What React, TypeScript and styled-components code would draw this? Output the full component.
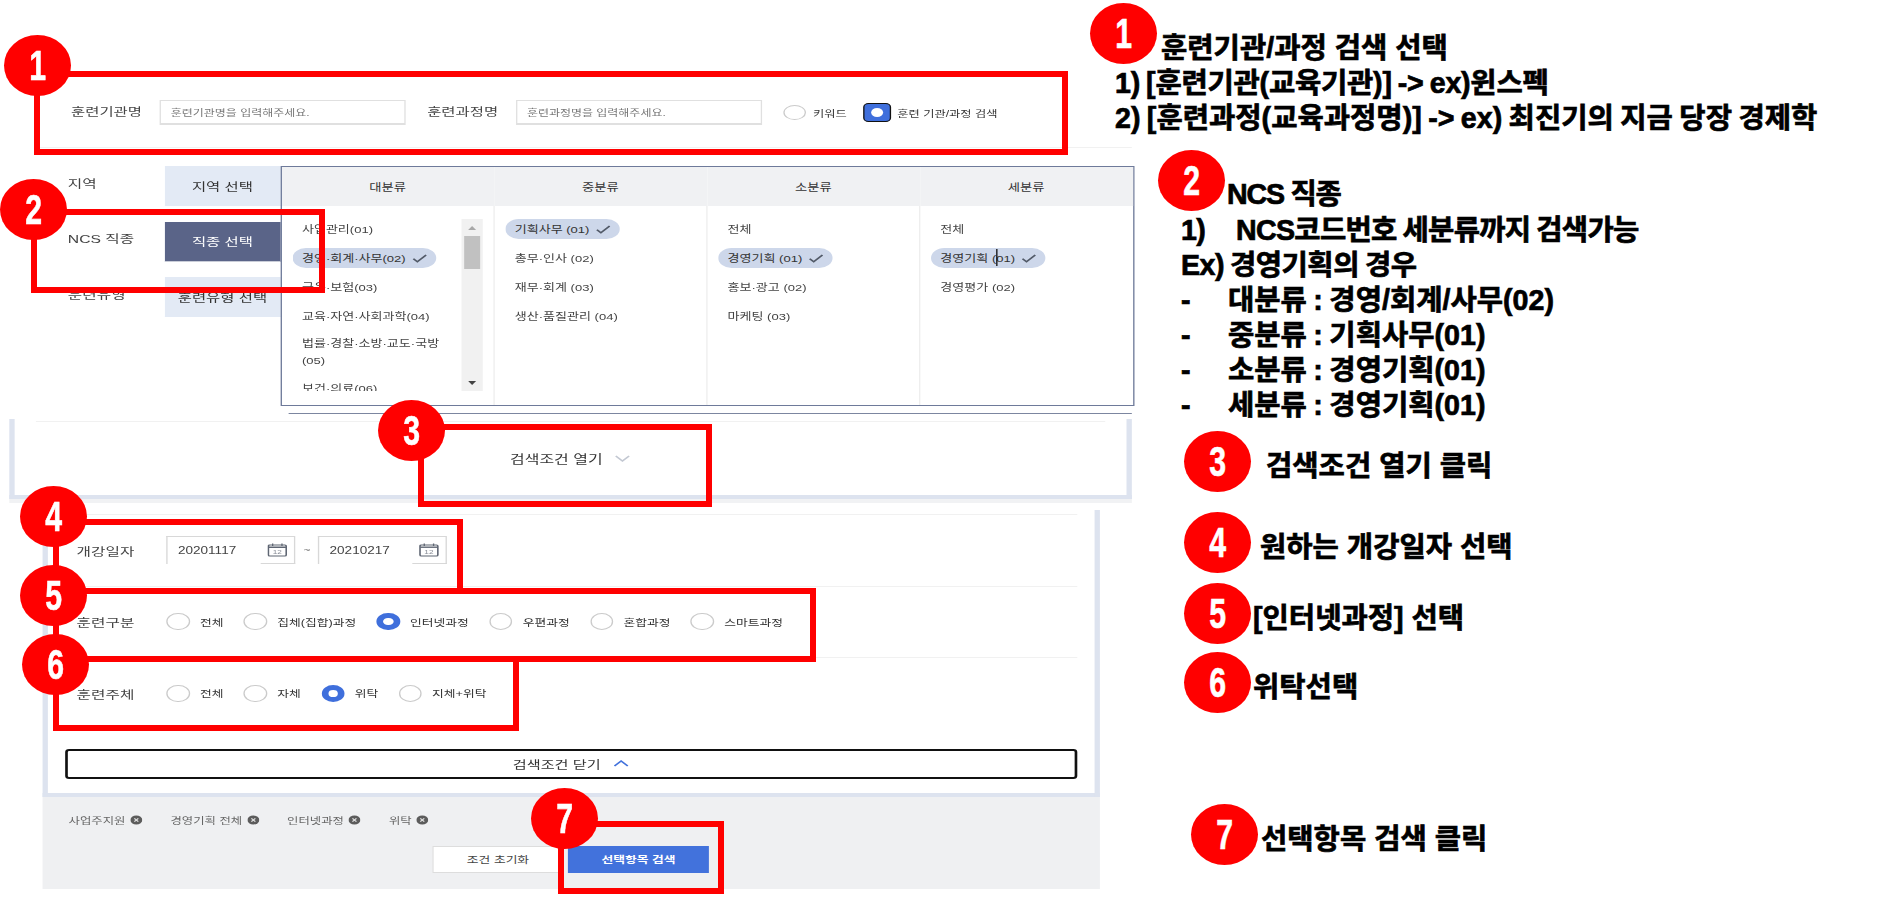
import React from "react";
import styled, { createGlobalStyle } from "styled-components";

const KR = `"Liberation Sans", "Noto Sans CJK KR", sans-serif`;

const GlobalStyle = createGlobalStyle`
  html, body { margin: 0; padding: 0; background: #fff; }
  * { box-sizing: border-box; }
`;

const Page = styled.div`
  position: relative;
  width: 1883px;
  height: 898px;
  display: flex;
  overflow: hidden;
  font-family: ${KR};
`;

/* the captured screen in the reference is stretched sideways, so lay it out narrow and widen it */
const ShotSlot = styled.div`
  flex: none;
  width: 1085px;
`;
const Shot = styled.div`
  width: 853.4px;
  transform: scaleX(1.33);
  transform-origin: left top;
  color: #444;
  filter: blur(0.3px);
`;

const SearchRow = styled.div`
  display: flex;
  align-items: center;
  height: 25px;
  margin-top: 100px;
  padding-left: 53.4px;
`;
const FieldLabel = styled.div`
  width: 67px;
  flex: none;
  font-size: 11.6px;
  margin-top: -3px;
  white-space: nowrap;
`;
const TextBox = styled.div`
  width: 185px;
  height: 25px;
  flex: none;
  display: flex;
  align-items: center;
  padding-left: 7px;
  margin-right: 15.8px;
  border: 1px solid #e0e0e0;
  border-bottom-width: 2px;
  font-size: 9px;
  color: #777;
  white-space: nowrap;
`;
const Radio = styled.span<{ $on?: boolean; $h?: number }>`
  display: block;
  flex: none;
  width: 17.3px;
  height: ${(p) => p.$h ?? 17}px;
  border-radius: 50%;
  background: #fff;
  border: ${(p) => (p.$on ? "5px solid #3f6fdc" : "1.7px solid #cbcbcb")};
`;
const FocusRing = styled.span`
  display: flex;
  flex: none;
  align-items: center;
  justify-content: center;
  width: 21px;
  height: 19px;
  border: 1.5px solid #111;
  border-radius: 4px;
  margin-left: 12px;
  background: #3f6fdc;
`;
const FocusDot = styled.span`
  display: block;
  width: 9px;
  height: 9px;
  border-radius: 50%;
  background: #fff;
`;
const SmallOption = styled.span`
  font-size: 9.2px;
  margin-left: 5px;
  white-space: nowrap;
  color: #333;
`;

const Divider = styled.div<{ $left: number; $w: number; $top: number; $color?: string }>`
  height: 1px;
  margin-left: ${(p) => p.$left}px;
  margin-top: ${(p) => p.$top}px;
  width: ${(p) => p.$w}px;
  background: ${(p) => p.$color ?? "#f1f1f1"};
`;

const SelectArea = styled.div`
  display: flex;
  margin-top: 18px;
  height: 240px;
`;
const FilterCol = styled.div`
  width: 210.5px;
  flex: none;
  padding-left: 51px;
  display: flex;
  flex-direction: column;
  gap: 15.5px;
`;
const FilterRow = styled.div`
  display: flex;
  align-items: center;
  height: 40px;
`;
const FilterLabel = styled.div`
  width: 73px;
  flex: none;
  font-size: 11.8px;
  margin-top: -8px;
  white-space: nowrap;
`;
const FilterButton = styled.div<{ $on?: boolean }>`
  width: 86.5px;
  height: 40px;
  flex: none;
  display: flex;
  align-items: center;
  justify-content: center;
  font-size: 11.6px;
  white-space: nowrap;
  background: ${(p) => (p.$on ? "#5a6488" : "#e3eaf5")};
  color: ${(p) => (p.$on ? "#fff" : "#333")};
  border-bottom: 1px solid ${(p) => (p.$on ? "#c9cdd8" : "#e3eaf5")};
`;

const CodeTable = styled.div`
  width: 642px;
  height: 240px;
  flex: none;
  border: 1px solid #6e7a9a;
  display: grid;
  grid-template-columns: repeat(4, 160px);
  grid-template-rows: 39px 1fr;
  overflow: hidden;
`;
const ColHead = styled.div`
  background: #f0f1f3;
  display: flex;
  align-items: center;
  justify-content: center;
  font-size: 10px;
  color: #333;
`;
const ColBody = styled.div<{ $last?: boolean }>`
  display: flex;
  border-right: ${(p) => (p.$last ? "none" : "1px solid #eee")};
  padding: 13px 0 0 8px;
  min-height: 0;
`;
const ItemList = styled.ul`
  list-style: none;
  margin: 0;
  padding: 0;
  flex: 1;
  height: 172px;
  overflow: hidden;
  display: flex;
  flex-direction: column;
  gap: 9px;
`;
const Item = styled.li`
  flex: none;
  min-height: 20px;
  display: flex;
  align-items: center;
  padding-left: 7.5px;
  padding-right: 3px;
  font-size: 9.8px;
  line-height: 17px;
  color: #444;
`;
const SelectedItem = styled.li`
  position: relative;
  flex: none;
  align-self: flex-start;
  height: 20px;
  display: flex;
  align-items: center;
  gap: 5px;
  padding: 0 7px 0 7.5px;
  border-radius: 10px;
  background: #cdd7ea;
  font-size: 9.8px;
  color: #333;
  white-space: nowrap;
`;
const Caret = styled.span`
  position: absolute;
  left: 49px;
  top: 1px;
  width: 1px;
  height: 17px;
  background: #111;
`;
const ScrollTrack = styled.div`
  width: 16px;
  height: 172px;
  flex: none;
  margin-right: 7.5px;
  background: #f1f1f1;
  display: flex;
  flex-direction: column;
  align-items: center;
`;
const ScrollArrow = styled.div<{ $down?: boolean }>`
  height: 17px;
  flex: none;
  display: flex;
  align-items: center;
  justify-content: center;
  &::before {
    content: "";
    border-left: 3.5px solid transparent;
    border-right: 3.5px solid transparent;
    border-bottom: ${(p) => (p.$down ? "none" : "4px solid #a8a8a8")};
    border-top: ${(p) => (p.$down ? "4px solid #444" : "none")};
  }
`;
const ScrollThumb = styled.div`
  width: 12.5px;
  height: 33px;
  background: #c1c1c1;
`;
const ScrollSpace = styled.div`
  flex: 1;
`;

const OpenPanel = styled.div`
  margin-top: 5px;
  margin-left: 6.8px;
  width: 844px;
  height: 80px;
  border: solid #dde3ef;
  border-width: 0 4.5px 4px;
  box-shadow: 0 4px 0 #f1f2f4;
  display: flex;
  flex-direction: column;
`;
const Toggle = styled.div`
  flex: 1;
  display: flex;
  align-items: center;
  justify-content: center;
  gap: 9px;
  font-size: 12px;
  color: #333;
`;
const OpenPanelLine = styled.div`
  height: 1px;
  margin: 2px 16px 0;
  background: #f1f1f1;
`;

const DetailPanel = styled.div`
  margin-top: 11px;
  margin-left: 31.6px;
  width: 795.5px;
  border: solid #dde3ef;
  border-width: 0 4px 4px;
  padding: 4px 13.5px 14px 13px;
`;
const DetailRow = styled.div`
  height: 71.5px;
  border-top: 1px solid #f1f1f1;
  display: flex;
  align-items: center;
  padding-left: 9px;
`;
const RowLabel = styled.div`
  width: 67.7px;
  flex: none;
  font-size: 11.8px;
  white-space: nowrap;
`;
const RadioGroup = styled.div`
  display: flex;
  align-items: center;
  gap: 15.4px;
`;
const RadioOption = styled.div`
  display: flex;
  align-items: center;
  gap: 7.8px;
  font-size: 9.6px;
  color: #333;
  white-space: nowrap;
`;
const DateField = styled.div`
  width: 97px;
  height: 28px;
  flex: none;
  display: flex;
  align-items: center;
  justify-content: space-between;
  padding-left: 7.5px;
  border-left: 1px solid #d8d8d8;
  border-top: 1px solid #d8d8d8;
  font-size: 10.2px;
  color: #444;
`;
const CalendarCell = styled.div`
  width: 26px;
  height: 27px;
  display: flex;
  align-items: center;
  justify-content: center;
  border-right: 1px solid #d8d8d8;
  border-bottom: 1px solid #d8d8d8;
`;
const Tilde = styled.div`
  width: 17px;
  flex: none;
  text-align: center;
  font-size: 9px;
  color: #777;
`;
const CloseButton = styled.div`
  margin-top: 20px;
  height: 30px;
  border: 2px solid #111;
  border-radius: 3px;
  background: #fff;
  display: flex;
  align-items: center;
  justify-content: center;
  gap: 9px;
  font-size: 11.4px;
  color: #333;
`;

const Footer = styled.div`
  margin-left: 31.6px;
  width: 795.5px;
  height: 92px;
  background: #eff0f2;
  padding: 15px 0 0 20px;
`;
const TagRow = styled.div`
  display: flex;
  align-items: center;
  gap: 21px;
  height: 16px;
`;
const Tag = styled.div`
  display: flex;
  align-items: center;
  gap: 3.8px;
  font-size: 9.3px;
  color: #666;
  white-space: nowrap;
`;
const ButtonRow = styled.div`
  display: flex;
  justify-content: center;
  gap: 3px;
  margin: 18px 0 0 -20px;
`;
const ResetButton = styled.div`
  width: 98.5px;
  height: 27px;
  background: #fff;
  border: 1px solid #ddd;
  display: flex;
  align-items: center;
  justify-content: center;
  font-size: 9.6px;
  color: #444;
`;
const SearchButton = styled.div`
  width: 106.8px;
  height: 27px;
  background: #4272dc;
  display: flex;
  align-items: center;
  justify-content: center;
  font-size: 9.6px;
  font-weight: 700;
  color: #fff;
`;

/* red notes drawn over the screen */
const Frame = styled.div<{ $x: number; $y: number; $w: number; $h: number }>`
  position: absolute;
  left: ${(p) => p.$x}px;
  top: ${(p) => p.$y}px;
  width: ${(p) => p.$w}px;
  height: ${(p) => p.$h}px;
  border: 6px solid #ff0000;
`;
const Dot = styled.div`
  width: 67px;
  height: 61px;
  flex: none;
  border-radius: 50%;
  background: #ff0000;
  display: flex;
  align-items: center;
  justify-content: center;
`;
const Digit = styled.span`
  display: block;
  color: #fff;
  font-family: "Liberation Sans", sans-serif;
  font-weight: 700;
  font-size: 42px;
  line-height: 1;
  transform: scaleX(0.72);
  -webkit-text-stroke: 0.6px #fff;
`;
const PinnedDot = styled(Dot)<{ $x: number; $y: number }>`
  position: absolute;
  left: ${(p) => p.$x}px;
  top: ${(p) => p.$y}px;
`;

const Notes = styled.div`
  flex: 1;
  min-width: 0;
  color: #000;
  font-weight: 700;
  font-size: 28.6px;
  -webkit-text-stroke: 0.7px #000;
  white-space: nowrap;
`;
const NoteHead = styled.div<{ $x: number; $top: number; $drop: number; $gap?: number }>`
  display: flex;
  align-items: center;
  gap: ${(p) => p.$gap ?? 4}px;
  margin-left: ${(p) => p.$x}px;
  margin-top: ${(p) => p.$top}px;
  height: 61px;
  line-height: 35px;
  & > span {
    padding-top: ${(p) => p.$drop}px;
  }
`;
const NoteTitleTight = styled.span`
  letter-spacing: -1.2px;
`;
const NoteLine = styled.div<{ $x: number; $top?: number; $tight?: number }>`
  display: flex;
  height: 35px;
  line-height: 35px;
  word-spacing: -1.5px;
  letter-spacing: ${(p) => p.$tight ?? 0}px;
  margin-left: ${(p) => p.$x}px;
  margin-top: ${(p) => p.$top ?? 0}px;
`;
const Bullet = styled.span<{ $w: number }>`
  display: block;
  width: ${(p) => p.$w}px;
  flex: none;
`;

const Check = () => (
  <svg width="11" height="9" viewBox="0 0 11 9" fill="none">
    <path d="M0.8 4.8 L3.8 7.8 L10.4 1" stroke="#525a68" strokeWidth="1.5" />
  </svg>
);

const Chevron = ({ up, color }: { up?: boolean; color: string }) => (
  <svg width="12" height="7" viewBox="0 0 12 7" fill="none">
    <path d={up ? "M1 6 L6 1 L11 6" : "M1 1 L6 6 L11 1"} stroke={color} strokeWidth="1.4" />
  </svg>
);

const CalendarIcon = () => (
  <svg width="15" height="14" viewBox="0 0 15 14" fill="none">
    <rect x="0.8" y="2" width="13.4" height="11" rx="1" fill="#fff" stroke="#5f6673" strokeWidth="1.2" />
    <path d="M1 4.2 H14" stroke="#5f6673" strokeWidth="1.4" />
    <path d="M4 0.5 V3 M11 0.5 V3" stroke="#5f6673" />
    <text x="7.5" y="11.4" fontSize="6.2" textAnchor="middle" fill="#8a8f98" fontFamily="Liberation Sans, sans-serif">12</text>
  </svg>
);

const RemoveIcon = () => (
  <svg width="9" height="10" viewBox="0 0 9 10">
    <ellipse cx="4.5" cy="5" rx="4.5" ry="4.5" fill="#5c5c5c" />
    <path d="M3 3.3 L6 6.7 M6 3.3 L3 6.7" stroke="#ddd" strokeWidth="1" />
  </svg>
);

const columns = [
  {
    title: "대분류",
    items: ["사업관리(01)", "경영·회계·사무(02)", "금융·보험(03)", "교육·자연·사회과학(04)", "법률·경찰·소방·교도·국방(05)", "보건·의료(06)"],
    selected: 1,
    scroll: true,
  },
  { title: "중분류", items: ["기획사무 (01)", "총무·인사 (02)", "재무·회계 (03)", "생산·품질관리 (04)"], selected: 0 },
  { title: "소분류", items: ["전체", "경영기획 (01)", "홍보·광고 (02)", "마케팅 (03)"], selected: 1 },
  { title: "세분류", items: ["전체", "경영기획 (01)", "경영평가 (02)"], selected: 1, caret: true },
];

const trainingTypes = ["전체", "집체(집합)과정", "인터넷과정", "우편과정", "혼합과정", "스마트과정"];
const trainingOwners = ["전체", "자체", "위탁", "지체+위탁"];
const tags = ["사업주지원", "경영기획 전체", "인터넷과정", "위탁"];

const frames = [
  { x: 34, y: 71, w: 1034, h: 84 },
  { x: 31, y: 209, w: 294, h: 84 },
  { x: 418, y: 424, w: 294, h: 83 },
  { x: 53, y: 519, w: 410, h: 75 },
  { x: 53, y: 588, w: 763, h: 74 },
  { x: 53, y: 656, w: 466, h: 75 },
  { x: 558, y: 821, w: 166, h: 73 },
];

const dots = [
  { n: 1, x: 4, y: 35 },
  { n: 2, x: 0, y: 179 },
  { n: 3, x: 378, y: 400 },
  { n: 4, x: 20, y: 486 },
  { n: 5, x: 20, y: 565 },
  { n: 6, x: 22, y: 634 },
  { n: 7, x: 531, y: 788 },
];

const App = () => (
  <Page>
    <GlobalStyle />
    <ShotSlot>
      <Shot>
        <SearchRow>
          <FieldLabel>훈련기관명</FieldLabel>
          <TextBox>훈련기관명을 입력해주세요.</TextBox>
          <FieldLabel>훈련과정명</FieldLabel>
          <TextBox>훈련과정명을 입력해주세요.</TextBox>
          <Radio $h={15} />
          <SmallOption>키워드</SmallOption>
          <FocusRing>
            <FocusDot />
          </FocusRing>
          <SmallOption>훈련 기관/과정 검색</SmallOption>
        </SearchRow>
        <Divider $left={25.5} $w={825} $top={22} />

        <SelectArea>
          <FilterCol>
            <FilterRow>
              <FilterLabel>지역</FilterLabel>
              <FilterButton>지역 선택</FilterButton>
            </FilterRow>
            <FilterRow>
              <FilterLabel>NCS 직종</FilterLabel>
              <FilterButton $on>직종 선택</FilterButton>
            </FilterRow>
            <FilterRow>
              <FilterLabel>훈련유형</FilterLabel>
              <FilterButton>훈련유형 선택</FilterButton>
            </FilterRow>
          </FilterCol>
          <CodeTable>
            {columns.map((c) => (
              <ColHead key={c.title}>{c.title}</ColHead>
            ))}
            {columns.map((c, i) => (
              <ColBody key={c.title} $last={i === 3}>
                <ItemList>
                  {c.items.map((item, j) =>
                    j === c.selected ? (
                      <SelectedItem key={item}>
                        {item}
                        <Check />
                        {c.caret && <Caret />}
                      </SelectedItem>
                    ) : (
                      <Item key={item}>{item}</Item>
                    )
                  )}
                </ItemList>
                {c.scroll && (
                  <ScrollTrack>
                    <ScrollArrow />
                    <ScrollThumb />
                    <ScrollSpace />
                    <ScrollArrow $down />
                  </ScrollTrack>
                )}
              </ColBody>
            ))}
          </CodeTable>
        </SelectArea>
        <Divider $left={217.3} $w={634} $top={7} $color="#7c86a0" />

        <OpenPanel>
          <OpenPanelLine />
          <Toggle>
            검색조건 열기
            <Chevron color="#c3c8d2" />
          </Toggle>
        </OpenPanel>

        <DetailPanel>
          <DetailRow>
            <RowLabel>개강일자</RowLabel>
            <DateField>
              20201117
              <CalendarCell>
                <CalendarIcon />
              </CalendarCell>
            </DateField>
            <Tilde>~</Tilde>
            <DateField>
              20210217
              <CalendarCell>
                <CalendarIcon />
              </CalendarCell>
            </DateField>
          </DetailRow>
          <DetailRow>
            <RowLabel>훈련구분</RowLabel>
            <RadioGroup>
              {trainingTypes.map((t) => (
                <RadioOption key={t}>
                  <Radio $on={t === "인터넷과정"} />
                  {t}
                </RadioOption>
              ))}
            </RadioGroup>
          </DetailRow>
          <DetailRow>
            <RowLabel>훈련주체</RowLabel>
            <RadioGroup>
              {trainingOwners.map((t) => (
                <RadioOption key={t}>
                  <Radio $on={t === "위탁"} />
                  {t}
                </RadioOption>
              ))}
            </RadioGroup>
          </DetailRow>
          <CloseButton>
            검색조건 닫기
            <Chevron up color="#4272dc" />
          </CloseButton>
        </DetailPanel>

        <Footer>
          <TagRow>
            {tags.map((t) => (
              <Tag key={t}>
                {t}
                <RemoveIcon />
              </Tag>
            ))}
          </TagRow>
          <ButtonRow>
            <ResetButton>조건 초기화</ResetButton>
            <SearchButton>선택항목 검색</SearchButton>
          </ButtonRow>
        </Footer>
      </Shot>
    </ShotSlot>

    <Notes>
      <NoteHead $x={5} $top={3} $drop={29}>
        <Dot><Digit>1</Digit></Dot>
        <span>훈련기관/과정 검색 선택</span>
      </NoteHead>
      <NoteLine $x={30} $top={1.5} $tight={-0.25}>1) [훈련기관(교육기관)] -&gt; ex)윈스펙</NoteLine>
      <NoteLine $x={30}>2) [훈련과정(교육과정명)] -&gt; ex) 최진기의 지금 당장 경제학</NoteLine>

      <NoteHead $x={73} $top={14.5} $drop={27} $gap={2}>
        <Dot><Digit>2</Digit></Dot>
        <NoteTitleTight>NCS 직종</NoteTitleTight>
      </NoteHead>
      <NoteLine $x={96} $top={1.5} $tight={-0.7}>
        <Bullet $w={55}>1)</Bullet>NCS코드번호 세분류까지 검색가능
      </NoteLine>
      <NoteLine $x={96} $tight={-0.5}>Ex) 경영기획의 경우</NoteLine>
      <NoteLine $x={96}>
        <Bullet $w={47}>-</Bullet>대분류 : 경영/회계/사무(02)
      </NoteLine>
      <NoteLine $x={96}>
        <Bullet $w={47}>-</Bullet>중분류 : 기획사무(01)
      </NoteLine>
      <NoteLine $x={96}>
        <Bullet $w={47}>-</Bullet>소분류 : 경영기획(01)
      </NoteLine>
      <NoteLine $x={96}>
        <Bullet $w={47}>-</Bullet>세분류 : 경영기획(01)
      </NoteLine>

      <NoteHead $x={99} $top={8.5} $drop={10} $gap={15}>
        <Dot><Digit>3</Digit></Dot>
        <span>검색조건 열기 클릭</span>
      </NoteHead>
      <NoteHead $x={99} $top={20} $drop={10} $gap={9}>
        <Dot><Digit>4</Digit></Dot>
        <span>원하는 개강일자 선택</span>
      </NoteHead>
      <NoteHead $x={99} $top={10} $drop={10} $gap={2}>
        <Dot><Digit>5</Digit></Dot>
        <span>[인터넷과정] 선택</span>
      </NoteHead>
      <NoteHead $x={99} $top={8} $drop={10} $gap={2}>
        <Dot><Digit>6</Digit></Dot>
        <span>위탁선택</span>
      </NoteHead>
      <NoteHead $x={106} $top={91} $drop={10} $gap={3}>
        <Dot><Digit>7</Digit></Dot>
        <span>선택항목 검색 클릭</span>
      </NoteHead>
    </Notes>

    {frames.map((f) => (
      <Frame key={`${f.x}-${f.y}`} $x={f.x} $y={f.y} $w={f.w} $h={f.h} />
    ))}
    {dots.map((d) => (
      <PinnedDot key={d.n} $x={d.x} $y={d.y}>
        <Digit>{d.n}</Digit>
      </PinnedDot>
    ))}
  </Page>
);

export default App;
